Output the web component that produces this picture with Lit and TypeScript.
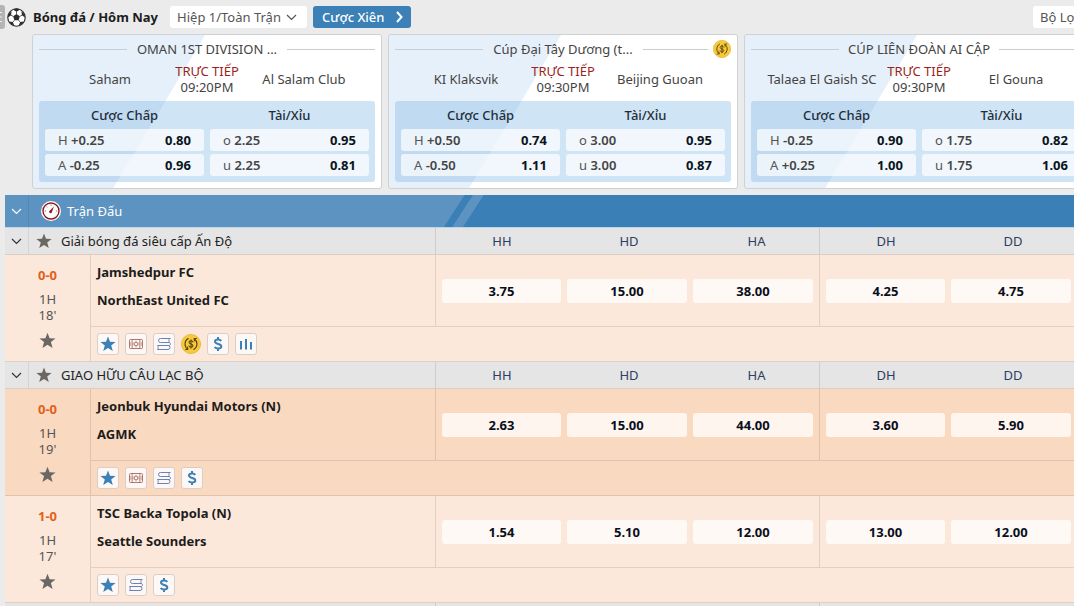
import { LitElement, html, svg, css, nothing } from "lit";
import { customElement, property } from "lit/decorators.js";
import { classMap } from "lit/directives/class-map.js";

type Tool = "star" | "ticket" | "stack" | "coin" | "dollar" | "bars";

interface Featured {
  league: string;
  coin?: boolean;
  home: string;
  away: string;
  time: string;
  lines: [string, string, string][][];
}

interface Match {
  score: string;
  minute: string;
  home: string;
  away: string;
  odds: string[];
  tools: Tool[];
  tinted?: boolean;
}

interface League {
  name: string;
  matches: Match[];
}

const FEATURED: Featured[] = [
  {
    league: "OMAN 1ST DIVISION ...",
    home: "Saham",
    away: "Al Salam Club",
    time: "09:20PM",
    lines: [
      [["H", "+0.25", "0.80"], ["o", "2.25", "0.95"]],
      [["A", "-0.25", "0.96"], ["u", "2.25", "0.81"]],
    ],
  },
  {
    league: "Cúp Đại Tây Dương (t...",
    coin: true,
    home: "KI Klaksvik",
    away: "Beijing Guoan",
    time: "09:30PM",
    lines: [
      [["H", "+0.50", "0.74"], ["o", "3.00", "0.95"]],
      [["A", "-0.50", "1.11"], ["u", "3.00", "0.87"]],
    ],
  },
  {
    league: "CÚP LIÊN ĐOÀN AI CẬP",
    home: "Talaea El Gaish SC",
    away: "El Gouna",
    time: "09:30PM",
    lines: [
      [["H", "-0.25", "0.90"], ["o", "1.75", "0.82"]],
      [["A", "+0.25", "1.00"], ["u", "1.75", "1.06"]],
    ],
  },
];

const COLUMNS = ["HH", "HD", "HA", "DH", "DD"];

const LEAGUES: League[] = [
  {
    name: "Giải bóng đá siêu cấp Ấn Độ",
    matches: [
      {
        score: "0-0",
        minute: "18'",
        home: "Jamshedpur FC",
        away: "NorthEast United FC",
        odds: ["3.75", "15.00", "38.00", "4.25", "4.75"],
        tools: ["star", "ticket", "stack", "coin", "dollar", "bars"],
      },
    ],
  },
  {
    name: "GIAO HỮU CÂU LẠC BỘ",
    matches: [
      {
        score: "0-0",
        minute: "19'",
        home: "Jeonbuk Hyundai Motors (N)",
        away: "AGMK",
        odds: ["2.63", "15.00", "44.00", "3.60", "5.90"],
        tools: ["star", "ticket", "stack", "dollar"],
        tinted: true,
      },
      {
        score: "1-0",
        minute: "17'",
        home: "TSC Backa Topola (N)",
        away: "Seattle Sounders",
        odds: ["1.54", "5.10", "12.00", "13.00", "12.00"],
        tools: ["star", "stack", "dollar"],
      },
    ],
  },
];

const STAR = "M8 .6l2 5.2 5.6.3-4.4 3.4 1.6 5.5L8 11.9 3.200 15l1.600-5.500L.4 6.100 6 5.800z";

const star = (size: number) => svg`<svg width=${size} height=${size} viewBox="0 0 16 16" aria-hidden="true"><path d=${STAR} fill="currentColor"/></svg>`;

const chevron = html`<svg width="11" height="7" viewBox="0 0 11 7" fill="none" stroke="currentColor" stroke-width="1.200" aria-hidden="true"><path d="M1 1l4.500 4.500L10 1"/></svg>`;

const coin = (size: number) => html`<svg width=${size} height=${size} viewBox="0 0 20 20" fill="none" aria-hidden="true">
  <circle cx="10" cy="10" r="9.600" fill="#f7ca3c" stroke="#e3ad28" stroke-width=".7"/>
  <g stroke="#5b4210" stroke-width="1.100" stroke-linecap="round">
    <path d="M6.800 15.200A6.200 6.200 0 0 1 7.200 4.600"/>
    <path d="M13.200 4.800A6.200 6.200 0 0 1 12.800 15.400"/>
    <path d="M4.600 15.600l2.400-.3-.6-2.300M15.400 4.400l-2.400.3.6 2.300" stroke-width="1"/>
    <path d="M12 8c-.3-.9-1-1.200-2-1.200-1.200 0-2 .6-2 1.500 0 2.200 4 1.200 4 3.400 0 1-.8 1.500-2 1.500-1.100 0-1.800-.4-2.100-1.300M10 5.800v8.400"/>
  </g>
</svg>`;

const ICONS: Record<Tool, unknown> = {
  star: star(16),
  ticket: html`<svg width="16" height="16" viewBox="0 0 16 16" fill="none" stroke="#a5685a" stroke-width=".9" aria-hidden="true">
    <rect x="1.500" y="3.500" width="13" height="9" rx="1"/>
    <circle cx="8" cy="8" r="1.900"/>
    <path d="M4.800 3.500c-1 1.200-1 2.400 0 3v3c-1 .6-1 1.800 0 3M11.200 3.500c1 1.200 1 2.400 0 3v3c1 .6 1 1.800 0 3"/>
    <path d="M3 6v4M13 6v4M8 4.800v1M8 10.200v1" stroke-width=".8"/>
  </svg>`,
  stack: html`<svg width="16" height="16" viewBox="0 0 16 16" fill="none" stroke="#6a82b6" aria-hidden="true">
    <path d="M14.500 2.500H4.500a2 2 0 0 0 0 4h9M13.500 2.500c-.8 1.200-.8 2.800 0 4"/>
    <path d="M13.500 6.500c1.300.8 1.300 2.200 0 3H1.500"/>
    <path d="M1.500 9.500c1 1.200 1 2.800 0 4h10.500a2 2 0 0 0 0-4"/>
  </svg>`,
  coin: coin(20),
  dollar: html`<svg width="16" height="16" viewBox="0 0 16 16" fill="none" stroke="currentColor" stroke-width="2" aria-hidden="true">
    <path d="M11.300 4.900C10.500 3.900 9.400 3.500 8.100 3.500 6.300 3.500 5 4.300 5 5.600c0 3 6.300 1.700 6.300 4.700 0 1.400-1.300 2.200-3.200 2.200-1.500 0-2.700-.5-3.500-1.500M8 1v2.500M8 12.500V15"/>
  </svg>`,
  bars: html`<svg width="16" height="16" viewBox="0 0 16 16" fill="none" stroke="currentColor" stroke-width="2" aria-hidden="true">
    <path d="M3 5v8.500M8 3v10.500M13 6v7.500"/>
  </svg>`,
};

const TOOL_NAMES: Record<Tool, string> = {
  star: "Yêu thích",
  ticket: "Vé",
  stack: "Kèo",
  coin: "Hoàn tiền",
  dollar: "Tiền",
  bars: "Thống kê",
};

const shared = css`
  *,
  *::before {
    box-sizing: border-box;
  }
  button,
  select {
    font: inherit;
    color: inherit;
    margin: 0;
    padding: 0;
    border: 0;
    background: none;
    cursor: pointer;
  }
  svg {
    display: block;
    flex: none;
  }
`;

@customElement("featured-card")
class FeaturedCard extends LitElement {
  @property({ attribute: false }) data!: Featured;

  static styles = [
    shared,
    css`
      :host {
        display: block;
        flex: none;
        width: 350px;
      }
      .card {
        display: grid;
        gap: 3px;
        padding: 4px 6px 6px;
        border: 1px solid #cfd2d4;
        border-radius: 3px;
        background: linear-gradient(121deg, #e6f0fb 147px, #fff 148px);
        color: #444;
        white-space: nowrap;
      }
      .title {
        display: grid;
        grid-template-columns: 88px 1fr 88px;
        align-items: center;
        height: 20px;
        text-align: center;
      }
      .rule {
        display: flex;
        align-items: center;
        gap: 5px;
      }
      .rule::before {
        content: "";
        flex: 1;
        height: 1px;
        background: #c9cdd1;
      }
      .teams {
        display: grid;
        grid-template-columns: 1fr 52px 1fr;
        align-items: center;
        justify-items: center;
        height: 34px;
      }
      .live {
        line-height: 16px;
        text-align: center;
      }
      .flag {
        color: #9c1f22;
      }
      .panel {
        display: grid;
        grid-template-columns: 1fr 1fr;
        gap: 3px 6px;
        margin-top: 2px;
        padding: 3px 6px 6px;
        border-radius: 3px;
        background: rgba(122, 180, 225, 0.36);
      }
      .market {
        line-height: 22px;
        text-align: center;
        font-weight: 500;
        color: #1f2d3a;
      }
      .pick {
        display: flex;
        justify-content: space-between;
        align-items: center;
        height: 22px;
        padding: 0 13px;
        border-radius: 3px;
        background: rgba(255, 255, 255, 0.7);
        color: #555;
      }
      .line {
        font-weight: 600;
        color: #444;
      }
      .price {
        font-weight: 700;
        color: #0a1420;
      }
    `,
  ];

  render() {
    const d = this.data;
    return html`<article class="card">
      <div class="title">
        <span class="rule"></span>
        <span>${d.league}</span>
        <span class="rule">${d.coin ? coin(18) : nothing}</span>
      </div>
      <div class="teams">
        <span>${d.home}</span>
        <div class="live">
          <div class="flag">TRỰC TIẾP</div>
          <div>${d.time}</div>
        </div>
        <span>${d.away}</span>
      </div>
      <div class="panel">
        <span class="market">Cược Chấp</span>
        <span class="market">Tài/Xỉu</span>
        ${d.lines.flat().map(
          ([side, line, price]) => html`<button class="pick">
            <span>${side} <span class="line">${line}</span></span>
            <span class="price">${price}</span>
          </button>`
        )}
      </div>
    </article>`;
  }
}

@customElement("app-root")
class AppRoot extends LitElement {
  static styles = [
    shared,
    css`
      :host {
        display: block;
        height: 100vh;
        overflow: hidden;
        background: #ebebeb;
        font: 13px/16px "Noto Sans", "Open Sans", sans-serif;
        color: #333;
      }
      .toolbar {
        display: flex;
        align-items: center;
        height: 34px;
      }
      .drawer {
        width: 5px;
        height: 24px;
        overflow: hidden;
        border-radius: 0 3px 3px 0;
        background: #b4b4b4;
      }
      .ball {
        margin: 0 7px 0 2px;
      }
      .heading {
        margin: 0 12px 0 0;
        font-size: 13px;
        font-weight: 700;
        color: #1c1c1c;
      }
      .period {
        display: grid;
        align-items: center;
        margin-right: 6px;
        color: #555;
      }
      .period select {
        grid-area: 1 / 1;
        width: 137px;
        height: 22px;
        padding: 0 7px;
        border-radius: 3px;
        background: #fff;
        appearance: none;
      }
      .period svg {
        grid-area: 1 / 1;
        justify-self: end;
        margin-right: 10px;
        pointer-events: none;
      }
      .parlay {
        display: flex;
        align-items: center;
        justify-content: space-between;
        width: 98px;
        height: 22px;
        padding: 0 8px 0 9px;
        border-radius: 3px;
        background: #3b80b6;
        color: #fff;
        font-weight: 500;
      }
      .filter {
        width: 41px;
        height: 22px;
        margin-left: auto;
        padding-left: 7px;
        border-radius: 3px 0 0 3px;
        background: #fff;
        color: #555;
        text-align: left;
        white-space: nowrap;
      }
      .carousel {
        display: flex;
        gap: 6px;
        padding: 0 0 6px 32px;
        overflow: hidden;
      }
      .board {
        padding-left: 5px;
      }
      .section {
        display: flex;
        align-items: center;
        height: 33px;
        border-bottom: 1px solid #b9d7ec;
        background: linear-gradient(123deg, #5c93c1 385px, #3a7fb5 386px 392px, #5c93c1 393px 401px, #3a7fb5 402px);
        color: #fff;
      }
      .toggle {
        display: grid;
        place-items: center;
        width: 24px;
        height: 100%;
        border-right: 1px solid rgba(0, 0, 0, 0.08);
      }
      .section svg {
        margin-right: 6px;
      }
      .section .toggle {
        margin-right: 12px;
      }
      .section .toggle svg {
        margin: 0;
      }
      .section h2 {
        margin: 0;
        font-size: 13px;
        font-weight: 400;
      }
      table {
        width: 100%;
        table-layout: fixed;
        border-collapse: separate;
        border-spacing: 0;
      }
      th,
      td {
        padding: 0;
        text-align: left;
        font-weight: 400;
      }
      .c-toggle {
        width: 24px;
      }
      .c-status {
        width: 61px;
      }
      .c-edge {
        width: 129px;
      }
      .c-mid {
        width: 126px;
      }
      .league {
        height: 27px;
        background: #e5e5e5;
      }
      .league > * {
        border-bottom: 1px solid #dccdc4;
      }
      .league button {
        height: 26px;
      }
      .league-name {
        display: flex;
        align-items: center;
        gap: 9px;
        padding-left: 7px;
        color: #222;
      }
      .league-name svg,
      .status svg {
        color: #6b6864;
      }
      .league .col {
        padding-left: 4px;
        text-align: center;
        color: #2c3e63;
      }
      .divide {
        border-left: 1px solid rgba(60, 40, 30, 0.13);
      }
      .match {
        background: #fbe8da;
      }
      .tinted {
        background: #fad9c1;
      }
      .match td {
        border-bottom: 1px solid rgba(60, 40, 30, 0.13);
      }
      .main {
        height: 72px;
      }
      .extra {
        height: 35px;
      }
      .status {
        vertical-align: top;
      }
      .status-box {
        display: grid;
        justify-items: center;
        padding-top: 12px;
        color: #555;
      }
      .score {
        margin-bottom: 8px;
        font-weight: 700;
        color: #e0611a;
      }
      .status-box button {
        margin-top: 9px;
      }
      .teams {
        padding: 3px 0 0 6px;
        vertical-align: top;
        line-height: 28px;
        font-weight: 700;
        color: #1c1c1c;
      }
      .odd {
        padding: 0 3px;
      }
      .odd.divide {
        padding-left: 6px;
      }
      .odd.last-of-group {
        padding-right: 6px;
      }
      .odd button {
        width: 100%;
        height: 24px;
        border-radius: 3px;
        background: rgba(255, 255, 255, 0.72);
        font-weight: 700;
        color: #0a0f1c;
      }
      .tools {
        display: flex;
        align-items: center;
        gap: 6px;
        padding-left: 6px;
      }
      .tool {
        display: grid;
        place-items: center;
        width: 22px;
        height: 22px;
        border: 1px solid #d9cfc8;
        border-radius: 3px;
        background: #fdf8f5;
        color: #3b80b6;
      }
      .tool.round {
        width: 20px;
        border: 0;
        background: none;
      }
    `,
  ];

  private renderMatch(m: Match) {
    const tone = { match: true, tinted: !!m.tinted };
    return html`
      <tr class=${classMap({ ...tone, main: true })}>
        <td class="status" colspan="2" rowspan="2">
          <div class="status-box">
            <span class="score">${m.score}</span>
            <span>1H</span>
            <span>${m.minute}</span>
            <button aria-label="Theo dõi">${star(17)}</button>
          </div>
        </td>
        <td class="teams divide">
          <div>${m.home}</div>
          <div>${m.away}</div>
        </td>
        ${m.odds.map(
          (o, i) => html`<td class=${classMap({ odd: true, divide: i % 3 === 0, "last-of-group": i === 2 })}>
            <button>${o}</button>
          </td>`
        )}
      </tr>
      <tr class=${classMap({ ...tone, extra: true })}>
        <td class="divide" colspan="6">
          <div class="tools">
            ${m.tools.map(
              (t) => html`<button class=${classMap({ tool: true, round: t === "coin" })} aria-label=${TOOL_NAMES[t]}>
                ${ICONS[t]}
              </button>`
            )}
          </div>
        </td>
      </tr>
    `;
  }

  private renderLeague(l: League) {
    return html`<tbody>
      <tr class="league">
        <th><button class="toggle" aria-label="Thu gọn">${chevron}</button></th>
        <th colspan="2"><div class="league-name">${star(16)}<span>${l.name}</span></div></th>
        ${COLUMNS.map((c, i) => html`<th class=${classMap({ col: true, divide: i % 3 === 0 })} scope="col">${c}</th>`)}
      </tr>
      ${l.matches.map((m) => this.renderMatch(m))}
    </tbody>`;
  }

  render() {
    return html`
      <header class="toolbar">
        <button class="drawer" aria-label="Menu">
          <svg width="5" height="24" viewBox="0 0 5 24" fill="none" stroke="#eee" aria-hidden="true"><path d="M0 7.500h2M0 12h2M0 16.500h2"/></svg>
        </button>
        <svg class="ball" width="19" height="19" viewBox="0 0 20 20" aria-hidden="true">
          <circle cx="10" cy="10" r="9.200" fill="#fff" stroke="#2b2b2b" stroke-width="1.200"/>
          <g fill="#2b2b2b">
            <path d="M10 6.300l3.500 2.500-1.300 4.100H7.800L6.500 8.800z"/>
            <path d="M6.200 1.500L10 4l3.800-2.500A9 9 0 0 0 6.200 1.500zM1 10l3.300-2.500.5-4.200A9 9 0 0 0 1 10zM19 10l-3.300-2.500-.5-4.200A9 9 0 0 1 19 10zM2.200 14.200l3.900.6 1.700 3.900a9 9 0 0 1-5.600-4.500zM17.800 14.200l-3.900.6-1.700 3.900a9 9 0 0 0 5.600-4.500z"/>
          </g>
          <path d="M10 6.500V3.500M13.400 8.800l2.600-1.300M12.200 12.800l1.700 2.200M7.800 12.800l-1.700 2.200M6.600 8.800L4 7.500" stroke="#2b2b2b" stroke-width=".8"/>
        </svg>
        <h1 class="heading">Bóng đá / Hôm Nay</h1>
        <label class="period">
          <select aria-label="Hiệp">
            <option>Hiệp 1/Toàn Trận</option>
          </select>
          ${chevron}
        </label>
        <button class="parlay">
          <span>Cược Xiên</span>
          <svg width="7" height="12" viewBox="0 0 7 12" fill="none" stroke="#fff" stroke-width="2" aria-hidden="true"><path d="M1 1l4.500 5L1 11"/></svg>
        </button>
        <button class="filter">Bộ Lọ</button>
      </header>
      <section class="carousel">${FEATURED.map((f) => html`<featured-card .data=${f}></featured-card>`)}</section>
      <main class="board">
        <div class="section">
          <button class="toggle" aria-label="Thu gọn">${chevron}</button>
          <svg width="20" height="20" viewBox="0 0 20 20" fill="none" aria-hidden="true">
            <circle cx="10" cy="10" r="10" fill="#fff"/>
            <circle cx="10" cy="10" r="8" stroke="#8c1a1d" stroke-width="1.400"/>
            <path d="M13 5.500L10.900 10.900A1.400 1.400 0 1 1 9 9.500z" fill="#8c1a1d"/>
            <path d="M10 3.500v1.200M3.800 10H5M15 10h1.200M5.600 5.600l.7.7" stroke="#8c1a1d" stroke-width=".7"/>
          </svg>
          <h2>Trận Đấu</h2>
        </div>
        <table>
          <colgroup>
            <col class="c-toggle" /><col class="c-status" /><col />
            <col class="c-edge" /><col class="c-mid" /><col class="c-edge" /><col class="c-edge" /><col class="c-mid" />
          </colgroup>
          ${LEAGUES.map((l) => this.renderLeague(l))}
          <tbody>
            <tr class="league">
              <td></td>
              <td colspan="2"></td>
              ${COLUMNS.map((_, i) => html`<td class=${classMap({ divide: i % 3 === 0 })}></td>`)}
            </tr>
          </tbody>
        </table>
      </main>
    `;
  }
}
